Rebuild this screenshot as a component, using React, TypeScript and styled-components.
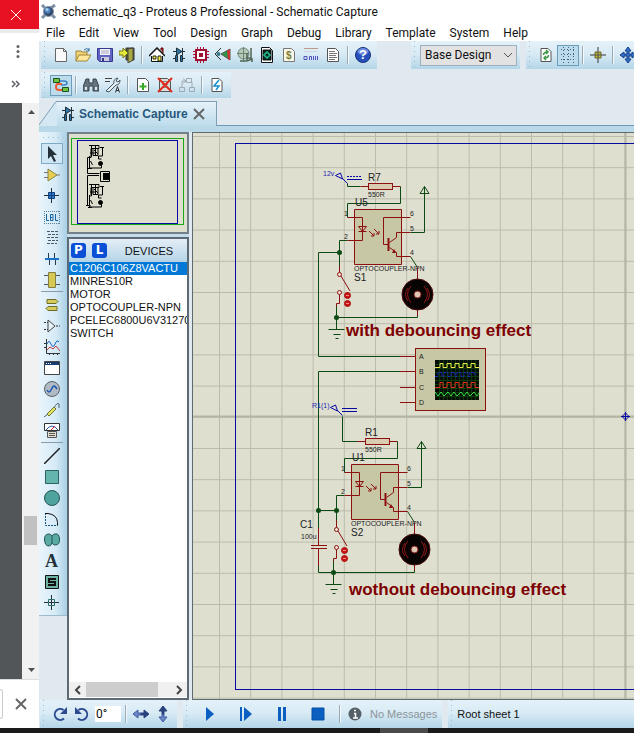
import React from 'react';
import styled, { createGlobalStyle, css } from 'styled-components';

const ui = 'Roboto, "Noto Sans", sans-serif';
const arial = '"Liberation Sans", Arial, sans-serif';
const barFill = 'linear-gradient(#e4f1f9 0%, #d9ebf5 45%, #b4d6e8 100%)';

const GlobalStyle = createGlobalStyle`
  *, *::before, *::after { box-sizing: border-box; }
  body { margin: 0; overflow: hidden; font: 12px/16px ${ui}; color: #111; }
  button, input, select { font: inherit; color: inherit; margin: 0; }
  svg { display: block; flex: none; }
`;

const Screen = styled.div`
  display: flex;
  flex-direction: column;
  height: 100vh;
  background: #fff;
`;
const Desktop = styled.div`
  display: flex;
  flex: 1;
  min-height: 0;
`;
const Taskbar = styled.footer`
  height: 5px;
  background: #1b1a1a;
  padding-left: 60%;
  &::before {
    content: '';
    display: block;
    width: 48px;
    height: 5px;
    background: #4b4a4a;
  }
`;

/* ---------- browser behind the window ---------- */
const BrowserEdge = styled.aside`
  display: flex;
  flex-direction: column;
  width: 39px;
  flex: none;
`;
const PlainButton = styled.button`
  display: flex;
  align-items: center;
  justify-content: center;
  padding: 0;
  border: 0;
  background: none;
  flex: none;
`;
const RedClose = styled(PlainButton)`
  height: 29px;
  background: #e81123;
  padding-right: 8px;
`;
const BrowserTools = styled.div`
  display: flex;
  flex-direction: column;
  height: 74px;
  padding: 8px 4px 0 0;
  gap: 10px;
  border-top: 4px solid #ebebeb;
`;
const BrowserTool = styled(PlainButton)<{ $end?: boolean }>`
  height: 22px;
  ${(p) => p.$end && css`padding-right: 4px;`}
`;
const BrowserPage = styled.div`
  display: flex;
  flex: 1;
  min-height: 0;
  background: #525659;
  justify-content: flex-end;
`;
const PageScroll = styled.div`
  display: flex;
  flex-direction: column;
  align-items: center;
  width: 17px;
  background: #f1f1f1;
`;
const PageThumb = styled.div`
  width: 13px;
  height: 29px;
  margin: auto 0 116px;
  background: #c1c1c1;
`;
const ScrollButton = styled(PlainButton)`
  width: 17px;
  height: 18px;
`;
const Download = styled.div`
  display: flex;
  align-items: center;
  justify-content: flex-end;
  height: 49px;
  padding-right: 10px;
  border-top: 1px solid #ddd;
`;
const DownloadEdge = styled.div`
  width: 3px;
  height: 30px;
  margin-right: auto;
  border: 1px solid #ccc;
  border-left: 0;
  border-radius: 0 4px 4px 0;
`;

/* ---------- application window ---------- */
const Window = styled.main`
  display: flex;
  flex-direction: column;
  flex: 1;
  min-width: 0;
  background: #e1e9f0;
`;
const TitleBar = styled.header`
  display: flex;
  align-items: center;
  gap: 5px;
  height: 24px;
  padding-left: 2px;
  background: #fff;
`;
const Title = styled.h1`
  margin: 0;
  font: 12px/16px ${ui};
  white-space: nowrap;
`;
const MenuBar = styled.nav`
  display: flex;
  height: 17px;
  background: #fff;
`;
const MenuItem = styled(PlainButton)`
  padding: 0 7px;
`;
const ToolbarRow = styled.div<{ $last?: boolean }>`
  display: flex;
  height: ${(p) => (p.$last ? 26 : 28)}px;
  margin-bottom: 3px;
  padding-left: 2px;
  overflow: hidden;
`;
const Toolbar = styled.div<{ $after?: number; $grow?: boolean }>`
  display: flex;
  align-items: center;
  flex: ${(p) => (p.$grow ? '1 0 auto' : 'none')};
  padding: 0 3px 0 9px;
  margin-right: ${(p) => p.$after ?? 0}px;
  background: radial-gradient(circle, #9fb9ca 1px, transparent 1px) 2px 3px / 3px 5px repeat-y, ${barFill};
`;
const Separator = styled.span`
  width: 1px;
  height: 18px;
  margin: 0 4px 0 3px;
  background: #9aabb6;
  box-shadow: 1px 0 #f2f8fc;
`;
const IconButton = styled(PlainButton)<{ $on?: boolean; $wide?: boolean }>`
  width: ${(p) => (p.$wide ? 36 : 22)}px;
  height: 21px;
  border: 1px solid ${(p) => (p.$on ? '#6d9cba' : 'transparent')};
  background: ${(p) => (p.$on ? '#bcdcec' : 'transparent')};
`;
const Combo = styled.div`
  display: grid;
  align-items: center;
  width: 97px;
  height: 21px;
  svg { grid-area: 1 / 1; justify-self: end; margin-right: 1px; pointer-events: none; }
`;
const ComboSelect = styled.select`
  grid-area: 1 / 1;
  width: 100%;
  height: 21px;
  padding: 0 4px;
  appearance: none;
  border: 1px solid #9db0bd;
  border-radius: 0;
  background: #e2e2e2;
`;
const TabStrip = styled.div`
  display: flex;
  height: 25px;
  flex: none;
  border-bottom: 1px solid #6f9ab3;
`;
const Tab = styled.div`
  display: flex;
  align-items: center;
  gap: 3px;
  height: 25px;
  padding: 0 9px 0 3px;
  border: solid #7f9fb3;
  border-width: 1px 1px 0 0;
  background: linear-gradient(#e6f2f9, #bcdcec);
`;
const TabName = styled(PlainButton)`
  gap: 3px;
  font: bold 12px/16px ${arial};
  color: #27587c;
`;
const Body = styled.div`
  display: flex;
  flex: 1;
  min-height: 0;
  padding-top: 6px;
  background: linear-gradient(#b9d8e8, #b9d8e8) 0 0 / 100% 6px no-repeat #e1e9f0;
`;
const Palette = styled.div`
  display: flex;
  flex-direction: column;
  align-items: center;
  align-self: flex-start;
  width: 28px;
  padding: 11px 2px 2px 0;
  background: radial-gradient(circle, #9fb9ca 1px, transparent 1px) 2px 4px / 5px 3px repeat-x,
    linear-gradient(90deg, #eaf5fc, #d5eaf6 60%, #a9d0e5);
  border-bottom: 1px solid #9dbccd;
`;
const PaletteButton = styled(PlainButton)<{ $on?: boolean }>`
  width: 22px;
  height: 21px;
  border: 1px solid ${(p) => (p.$on ? '#7faac5' : 'transparent')};
  background: ${(p) => (p.$on ? '#cfe7f4' : 'transparent')};
`;
const PaletteRule = styled.span`
  width: 22px;
  height: 1px;
  margin: 1px 0 2px;
  background: #8b9ca8;
`;
const Side = styled.section`
  display: flex;
  flex-direction: column;
  gap: 3px;
  width: 122px;
  flex: none;
  background: #c5dcea;
`;
const Overview = styled.div`
  height: 102px;
  flex: none;
  border: 2px solid #74808a;
  background: #dedfcf;
`;
const Picker = styled.div`
  display: flex;
  flex-direction: column;
  flex: 1;
  min-height: 0;
  border: 2px solid #5d6a75;
  background: #fff;
`;
const PickerHead = styled.div`
  display: flex;
  align-items: center;
  height: 23px;
  flex: none;
  padding: 0 2px;
  gap: 6px;
  background: linear-gradient(#e4eef7, #b5d4e6);
`;
const BlueKey = styled(PlainButton)`
  width: 15px;
  height: 15px;
  border-radius: 3px;
  background: #0a4fd6;
  color: #fff;
  font: bold 12px/15px "DejaVu Sans", sans-serif;
`;
const PickerTitle = styled.h2`
  margin: 0 auto;
  font: 11px/16px ${arial};
`;
const DeviceList = styled.ul`
  flex: 1;
  margin: 0;
  padding: 0;
  overflow: hidden;
  list-style: none;
`;
const Device = styled.button<{ $on?: boolean }>`
  display: block;
  width: 100%;
  height: 13px;
  padding: 0 1px;
  border: 0;
  overflow: hidden;
  text-align: left;
  white-space: nowrap;
  font: 11px/13px ${arial};
  color: ${(p) => (p.$on ? '#fff' : '#111')};
  background: ${(p) => (p.$on ? '#0078d7' : 'none')};
`;
const HScroll = styled.div`
  display: flex;
  height: 15px;
  margin-bottom: 1px;
  align-items: stretch;
  background: #f0f0f0;
`;
const HThumb = styled.div`
  width: 72px;
  margin-right: auto;
  background: #cdcdcd;
`;
const HArrow = styled(PlainButton)`
  width: 17px;
`;
const Canvas = styled.section`
  flex: 1;
  min-width: 0;
  margin-left: 3px;
  border: 1px solid #5b6b70;
  border-right: 0;
  background: #dedfcf;
  overflow: hidden;
`;
const StatusRow = styled(ToolbarRow)`
  margin: 0;
  padding-left: 1px;
  flex: none;
`;
const Angle = styled.input`
  width: 26px;
  height: 16px;
  padding: 0 1px;
  margin: 0 1px 0 2px;
  border: 0;
  background: #fff;
`;
const StatusText = styled.span<{ $dim?: boolean }>`
  font: 11px/16px ${arial};
  padding: ${(p) => (p.$dim ? '0 2px 0 4px' : '0')};
  color: ${(p) => (p.$dim ? '#8b949b' : '#111')};
`;

/* ---------- icons ---------- */
const K = '#23303a';
const page = <path d="M3 1.500h7l3 3v10H3z" fill="#fff" stroke="#555" />;
const icons: Record<string, React.ReactNode> = {
  new: <><path d="M2.500 1.500h8l3 3v10h-11z" fill="#fafafa" stroke="#666" /><path d="M10.500 1.500v3h3" fill="none" stroke="#666" /></>,
  open: <><path d="M1 14V4h5l1 1h5v3" fill="#efd479" stroke="#a08434" /><path d="M1 14l3-6h12l-4 6z" fill="#ffe89b" stroke="#a08434" /><path d="M9 3q3-3 5 0m0-2v3h-3" fill="none" stroke="#37719c" /></>,
  save: <><path d="M.5 1.500h15v13h-13l-2-2z" fill="#6264c4" stroke="#383a8c" /><path d="M3 2h10v6H3z" fill="#f1f3fa" /><path d="M4 4h8M4 6h8" stroke="#aab" /><path d="M4 10h8v4H4z" fill="#ccd" /><path d="M5 11h2v3H5z" fill="#333a80" /></>,
  exit: <><path d="M7 1h8v12H7z" fill="#5b5c22" stroke="#333" /><path d="M9 2l5-1v12l-5 3z" fill="#a9a944" stroke="#444" /><path d="M0 4h4V1l5 5-5 5V8H0z" fill="#e5e83c" stroke="#777716" /></>,
  home: <><path d="M12 3V1h2v5" fill="#a33" stroke="#600" /><path d="M2.500 8v6.500h11V8" fill="#fffde2" stroke="#111" /><path d="M0 9l8-8 8 8" fill="#fff" stroke="#111" strokeWidth="1.500" /><path d="M4 9h3v3H4z" fill="#ee3" stroke="#222" /><path d="M9 9h3v5H9z" fill="#ee3" stroke="#222" /></>,
  schem: <><path d="M2 4.500h12M11.500 1v7M2 11.500h2m8 0h2" stroke={K} /><path d="M5.500 1l5.500 3.500L5.500 8z" fill="#2876a5" stroke={K} /><path d="M4.500 8.500h2v6h-2zM9.500 8.500h2v6h-2z" fill="#2671a0" stroke={K} /></>,
  chip: <><path d="M0 4.500h16M0 7.500h16M0 10.500h16M4.500 0v16M7.500 0v16M10.500 0v16" stroke="#b31536" /><path d="M3 3h10v10H3z" fill="#fff" stroke="#a01030" strokeWidth="2" /><path d="M6 6h4v4H6z" fill="#a01030" /></>,
  view3d: <><path d="M6 1L0 7l6 6" fill="none" stroke="#333" /><circle cx="3.500" cy="7" r="2" fill="#3a7b88" /><path d="M6 7l9-5v11z" fill="#2a9a48" stroke="#555" /><path d="M12 4l3-2v11l-2-1z" fill="#c33" /></>,
  globe: <><circle cx="6.500" cy="6.500" r="5.500" fill="#b8c9b8" stroke="#688474" /><path d="M6.500 0v14M0 6.500h12" stroke="#688474" /><path d="M14 1v10h-4m0-5v8l5-2v3M3 14h6" fill="none" stroke="#526453" strokeWidth="1.500" /></>,
  gerber: <><path d="M2.500 .5h8l3 3v12h-11z" fill="#fff" stroke="#111" /><path d="M4 3h8v10H4z" fill="#05271a" stroke="#111" /><path d="M4 8h2m4 0h2M8 4v2m0 4v2M6 6h4v4H6z" fill="none" stroke="#29e1b1" /></>,
  bom: <><path d="M2.500 1.500h8l3 3v10h-11z" fill="#f7f7e7" stroke="#777" /><text x="5" y="12" fontFamily="Liberation Sans" fontSize="10" fontWeight="bold" fill="#807d32">$</text></>,
  ohms: <><path d="M1 1.500h14" stroke="#bb9c8c" /><path d="M1 4.500h14" stroke="#cdd8de" /><path d="M1 9.500h3v3H1zM6.500 13V9.500h2V13M10.500 9v4m2-4v4m2-4v4" fill="none" stroke="#5354bb" /></>,
  notes: <><path d="M2.500 1.500h8l3 3v10h-11z" fill="#fff" stroke="#555" /><path d="M4 4.500h6M4 6.500h8M4 8.500h7M4 10.500h8M4 12.500h6" stroke="#777" /></>,
  help: <><circle cx="8" cy="8" r="7.500" fill="#2850bd" stroke="#183077" /><ellipse cx="8" cy="4.500" rx="5.500" ry="3.500" fill="#6c8bda" /><text x="4" y="12" fontFamily="Liberation Sans" fontSize="13" fontWeight="bold" fill="#fff">?</text></>,
  refresh: <>{page}<path d="M5.500 8q0-3 4-3M8 3l2 2-2 2M10.500 8q0 3-4 3M8 9l-2 2 2 2" fill="none" stroke="#3d9948" strokeWidth="1.500" /></>,
  grid: <path d="M1 2.500h15M1 7.500h15M1 12.500h15M3.500 0v16M8.500 0v16M13.500 0v16" fill="none" stroke="#426481" strokeDasharray="1 2" />,
  origin: <><path d="M8 0v16M0 8h16" stroke="#333" /><path d="M5 5h6v6H5z" fill="#b8b63f" stroke="#6d6929" /><path d="M8 5v6M5 8h6" stroke="#555" /></>,
  pan: <path d="M8 0l3 4H9v3h3V5l4 3-4 3V9H9v3h2l-3 4-3-4h2V9H4v2L0 8l4-3v2h3V4H5z" fill="#366fc4" stroke="#123f88" />,
  auto: <><path d="M6 4h5q3 0 3 2t-3 2H8" fill="none" stroke="#3485c8" strokeWidth="1.500" /><path d="M9 7H5q-2 0-2 3t3 3h4" fill="none" stroke="#ee5934" strokeWidth="2" /><path d="M.5 1.500h6v4h-6zM9.500 10.500h6v4h-6z" fill="#72c33c" stroke="#17512a" /></>,
  find: <><path d="M3 2h3v4h4V2h3l3 8v4h-6V9H6v5H0v-4z" fill="#64737c" stroke="#34434e" /><path d="M2 10h2v3H2zM12 10h2v3h-2z" fill="#dce8ee" /></>,
  wrench: <><path d="M0 1.500h7M0 4.500h5" stroke="#444" /><path d="M1 14l8-8q-1-4 4-5l-2 3 2 1 2-2q0 5-4 5l-7 7z" fill="#e3edf2" stroke="#455965" /><path d="M10.500 15.500l2-6 2 6m-3.500-2h3" fill="none" stroke="#333" /></>,
  add: <><path d="M2.500 1.500h8l3 3v10h-11z" fill="#fff" stroke="#555" /><path d="M8 6v7M4.500 9.500h7" stroke="#36a927" strokeWidth="2" /></>,
  remove: <><path d="M2.500 1.500h8l3 3v10h-11z" fill="#ddd" stroke="#555" /><path d="M5 4.500h5M5 7.500h6M5 10.500h6" stroke="#888" /><path d="M1 1l14 14M15 1L1 15" stroke="#df2b1c" strokeWidth="2" /></>,
  tree: <><path d="M3 10V4h4m6 1v5M4 1.500l3 2.500-3 2.500M7.500 1.500h5v4h-5zM.5 10.500h5v4h-5zM10.500 10.500h5v4h-5z" fill="none" stroke="#9eabb2" /></>,
  erc: <>{page}<path d="M10 3L5 9h5l-3 4" fill="none" stroke="#168fca" strokeWidth="1.500" /></>,
  select: <path d="M4 0v13l3-3 3 6 2-1-3-6h4z" fill={K} />,
  part: <><path d="M0 5.500h4M0 10.500h4m8-2.500h4" stroke="#777" /><path d="M4 2l9 6-9 6z" fill="#e6cf51" stroke="#898544" /></>,
  junction: <><path d="M7.500 0v15M0 7.500h15" stroke={K} /><path d="M4.500 4.500h6v6h-6z" fill="#287acb" stroke="#123e79" /><path d="M7.500 4v7M4 7.500h7" stroke="#123e79" /></>,
  label: <><path d="M0 2.500h16M0 14.500h16M.5 2v13M15.500 2v13" stroke="#58809a" strokeDasharray="1 1" /><path d="M2.500 5v6.500H5M6.500 5.500v6h2.500v-6zM6.500 8.500h2M11.500 5v6.500H14" fill="none" stroke="#1363a1" /></>,
  script: <path d="M3 1.500h11M4 4.500h10M3 7.500h11M4 10.500h10M3 13.500h10" stroke="#4a5b66" strokeDasharray="3 1" />,
  bus: <><path d="M4.500 8V2m6 6V2M5.500 8v6m6-6v6" stroke="#263a4b" /><path d="M1 8h14" stroke="#1972c5" strokeWidth="2" /></>,
  subckt: <><path d="M0 3.500h16M0 12.500h16" stroke="#555" /><path d="M4.500 .5h7v15h-7z" fill="#d8c752" stroke="#827f43" /></>,
  terminal: <path d="M3 2.500h9l2 2-2 2H3zM13 9.500H4l-2 2 2 2h9z" fill="#d4cd5e" stroke="#6f6c25" />,
  pin: <><path d="M0 4.500h4M0 11.500h4m8-3.500h4" stroke="#333" strokeDasharray="2 1" /><path d="M4 2l7 6-7 6z" fill="#e5f2f8" stroke="#444" /></>,
  graph: <><path d="M2.500 0v14.500H16M0 4.500h2M0 8.500h2M5.500 14v2m4-2v2m4-2v2" stroke="#333" fill="none" /><path d="M3 5q2-5 4 0t4 0 4-2" fill="none" stroke="#1968be" /><path d="M3 11l3-3 3 2 3-3 4 5" fill="none" stroke="#c24039" /></>,
  popup: <><path d="M.5 1.500h15v13H.5z" fill="#fff" stroke="#444" /><path d="M1 2h14v3H1z" fill="#183c71" /><path d="M2 3.500h6" stroke="#fff" strokeDasharray="1 1" /></>,
  generator: <><circle cx="8" cy="8" r="7.500" fill="#b1bac5" stroke="#58616a" /><path d="M3 9q2 4 4 0t3-4 3 3" fill="none" stroke="#1956b0" strokeWidth="1.500" /></>,
  probe: <><path d="M0 15l4-3m6-6q3-6 5-4v4" fill="none" stroke="#53646b" /><path d="M3 12l7-7 2 2-7 7z" fill="#e2e65d" stroke="#6e7334" /></>,
  meter: <><path d="M.5 .5h15v7H.5z" fill="#fff" stroke="#333" /><path d="M2 7q6-8 12 0" fill="none" stroke="#315fb1" /><path d="M7 7l4-4" stroke="#d22" /><path d="M3.500 8.500h9v6h-9zM5 10.500h6M5 12.500h6" fill="#e2e1d2" stroke="#555" /></>,
  line: <path d="M0 16L16 0" stroke="#222" strokeWidth="1.500" />,
  box: <path d="M1.500 1.500h13v13h-13z" fill="#64b5ae" stroke="#2c6462" />,
  circle: <circle cx="8" cy="8" r="7.500" fill="#4fa39e" stroke="#265654" />,
  arc: <><path d="M1.500 2v12.500h12" fill="none" stroke="#15507c" strokeDasharray="2 1" /><path d="M1 2.500h3q9 1 9.500 9v3" fill="none" stroke="#111" /></>,
  path: <path d="M8 4Q7 2 5 2 0 2 .5 8T5 14q2 0 3-3 1 2 3 2 5 0 4.500-6T11 2Q9 2 8 4v7" fill="#58aaa3" stroke="#265755" />,
  text: <text x="1" y="14" fontSize="18" fontWeight="bold" fontFamily="Liberation Serif" fill={K}>A</text>,
  symbol: <><path d="M1.500 1.500h13v13h-13z" fill="#6cb3a4" stroke="#111" /><path d="M12 5H5v3h6v3H4" fill="none" stroke="#111" strokeWidth="2" /></>,
  marker: <><path d="M7.500 0v15M0 7.500h15" stroke={K} /><path d="M4.500 4.500h6v6h-6z" fill="none" stroke="#2e6e69" /></>,
  cw: <><path d="M12 12.500a5.500 5.500 0 1 1-.5-8.500" fill="none" stroke="#2c4a91" strokeWidth="2" /><path d="M15 1v7H8z" fill="#2c4a91" /></>,
  ccw: <><path d="M4 12.500a5.500 5.500 0 1 0 .5-8.500" fill="none" stroke="#2c4a91" strokeWidth="2" /><path d="M1 1v7h7z" fill="#2c4a91" /></>,
  flipx: <><path d="M0 8l5-4v3h3v2H5v3z" fill="#6d86c7" stroke="#405ca5" /><path d="M16 8l-5-4v3H8v2h3v3z" fill="#28427f" stroke="#28427f" /></>,
  flipy: <><path d="M8 16l-4-5h3V8h2v3h3z" fill="#6d86c7" stroke="#405ca5" /><path d="M8 0L4 5h3v3h2V5h3z" fill="#28427f" stroke="#28427f" /></>,
  play: <path d="M4 1l8 7-8 7z" fill="#0a5fc0" />,
  step: <path d="M2 1h2v14H2zM6 1l8 7-8 7z" fill="#0a5fc0" />,
  pause: <path d="M4 1h3v14H4zM9 1h3v14H9z" fill="#0a5fc0" />,
  stop: <path d="M2 2h12v12H2z" fill="#0a5fc0" stroke="#0650a8" />,
  info: <><circle cx="8" cy="8" r="6.500" fill="#555f66" /><path d="M7 7.500h1.500V12M6 12h5M7 4.500h2" stroke="#fff" strokeWidth="1.500" fill="none" /></>,
  logo: <><path d="M1 1l3 3M14 1l-4 3M1 14l3-3M14 14l-4-4" stroke="#7c8fa5" strokeWidth="3" /><circle cx="7.500" cy="7.500" r="5" fill="#33496b" stroke="#7f93ab" /><circle cx="6.500" cy="6.500" r="3" fill="#4f86c0" /><circle cx="6" cy="5.500" r="1.500" fill="#a6cbea" /></>,
  x: <path d="M3 3l10 10M13 3L3 13" stroke="#666" strokeWidth="2" />,
  bigx: <path d="M3 3l10 10M13 3L3 13" stroke="#fff" strokeWidth="1" />,
  up: <path d="M5 10h7L8.500 6z" fill="#505050" />,
  down: <path d="M5 6h7l-3.500 4z" fill="#505050" />,
  left: <path d="M10 4L6 8l4 4" fill="none" stroke="#444" strokeWidth="2" />,
  right: <path d="M6 4l4 4-4 4" fill="none" stroke="#444" strokeWidth="2" />,
  chevron: <path d="M4 6l4 4 4-4" fill="none" stroke="#555" />,
  dots: <><circle cx="8" cy="2.500" r="1.500" fill="#5f6368" /><circle cx="8" cy="7.500" r="1.500" fill="#5f6368" /><circle cx="8" cy="12.500" r="1.500" fill="#5f6368" /></>,
  more: <path d="M4 5l3 3-3 3m4-6l3 3-3 3" fill="none" stroke="#5f6368" strokeWidth="1.500" />,
};
const Icon = ({ name }: { name: string }) => (
  <svg width="16" height="16" viewBox="0 0 16 16" aria-hidden="true">{icons[name]}</svg>
);
const Tools = ({ names, on, wide }: { names: string[]; on?: string; wide?: boolean }) => (
  <>
    {names.map((n, i) =>
      n === '|' ? <Separator key={i} /> : (
        <IconButton key={i} $on={n === on} $wide={wide} aria-label={n}><Icon name={n} /></IconButton>
      ),
    )}
  </>
);

/* ---------- schematic ---------- */
const RED = '#8c1010';
const GREEN = '#0c4a14';
const BLUE = '#0808a4';
const Label = styled.text<{ $size?: number; $fill?: string }>`
  font: ${(p) => p.$size ?? 7}px ${arial};
  fill: ${(p) => p.$fill ?? '#222'};
`;
const Caption = styled.text`
  font: bold 17px ${arial};
  fill: #7e0000;
`;
const Wire = ({ d, color = GREEN }: { d: string; color?: string }) => (
  <path d={d} fill="none" stroke={color} />
);
const Node = ({ x, y }: { x: number; y: number }) => <circle cx={x} cy={y} r="2.500" fill={GREEN} />;

const Probe = ({ x, y, text, dx = -24, dashed }: { x: number; y: number; text: string; dx?: number; dashed?: boolean }) => (
  <g transform={`translate(${x} ${y})`}>
    <Label x={dx} y="-7" $fill="#2626b0">{text}</Label>
    <path d="M-11.500 -7.500l5-2.500 2 6zM-5 -5l5.500 5.500" fill="none" stroke={BLUE} />
    <path d="M0 -6.500h15" stroke={BLUE} strokeDasharray={dashed ? '2 1' : undefined} />
    <path d="M0 -3.500h15" stroke={BLUE} />
  </g>
);

type StageProps = { x: number; y: number; tapY: number; resistor: string; chip: string; sw: string };
const Stage = ({ x, y, tapY, resistor, chip, sw }: StageProps) => (
  <g transform={`translate(${x} ${y})`}>
    <Wire d="M154.500 53.500h13M207.500 53.500v17h-53v14M154.500 107.500h-8v32M217.500 99.500h14v-46M217.500 123.500l7 11M143.500 172.500v24M143.500 184.500h81v-3" />
    <Wire color={RED} d="M167.500 53.500h8M199.500 53.500h8M224.500 134.500v12M224.500 176.500v6M146.500 132.500v7M146.500 161.500v9h-3v3" />
    <rect x="175.500" y="50.500" width="24" height="6" fill="#d9ccb1" stroke={RED} />
    <path d="M161.500 76.500h47v55h-47z" fill="#c7c6a5" stroke={RED} />
    <path d="M154.500 84.500h15v23h-15M165.500 93.500h8l-4 5zM165.500 98.500h8M217.500 84.500h-27v27h5M217.500 99.500h-14v5l-7 5M217.500 123.500h-14v-4l-7-5M176 98l5 5m-3 0h3v-3M181 96l5 5m-3 0h3v-3" fill="none" stroke={RED} />
    <path d="M195.500 105v13" stroke={RED} strokeWidth="2" />
    <path d="M203 120l-4 0 2-4z" fill={RED} />
    <path d="M227 60.500h9l-4.500-7z" fill="none" stroke={GREEN} />
    <Node x={146.500} y={tapY} />
    <Node x={143.500} y={184.500} />
    <Wire d="M135.500 196.500h16M140.500 201.500h7M142.500 205.500h3" />
    <path d="M148 143l9 15" stroke={RED} />
    <circle cx="146.500" cy="141.500" r="2" fill="#efe2d2" stroke={RED} />
    <circle cx="146.500" cy="159.500" r="2" fill="#efe2d2" stroke={RED} />
    {[162.5, 170.5].map((cy) => (
      <g key={cy}>
        <circle cx="154.500" cy={cy} r="3" fill="#c81414" stroke="#b00d0d" />
        <path d={`M153 ${cy}h3`} stroke="#eb8d8d" />
      </g>
    ))}
    <circle cx="224.500" cy="161.500" r="15.500" fill="#080404" stroke="#4c0909" />
    <circle cx="224.500" cy="161.500" r="3.500" fill="#dcc8b4" stroke="#821717" />
    <path d="M218 153q-7 8 0 17M215 155q-5 7 0 13M231 153q7 8 0 17M234 155q5 7 0 13" fill="none" stroke="#901818" />
    <Label x="175" y="48" $size={10}>{resistor}</Label>
    <Label x="175" y="64">550R</Label>
    <Label x="162" y="73" $size={10}>{chip}</Label>
    <Label x="161" y="148" $size={10}>{sw}</Label>
    <Label x="161" y="138">OPTOCOUPLER-NPN</Label>
    <Label x="151" y="83">1</Label>
    <Label x="151" y="106">2</Label>
    <Label x="217" y="83">6</Label>
    <Label x="217" y="98">5</Label>
    <Label x="217" y="122">4</Label>
  </g>
);

const Oscilloscope = () => (
  <g>
    <Wire color={RED} d="M207 223.500h15M207 238.500h15M207 254.500h15M207 269.500h15" />
    <rect x="222.500" y="215.500" width="70" height="62" fill="#c7c6a5" stroke={RED} />
    <rect x="242" y="227" width="44" height="40" fill="#050d05" />
    <path d="M246.500 227v40M250.500 227v40M254.500 227v40M258.500 227v40M262.500 227v40M266.500 227v40M270.500 227v40M274.500 227v40M278.500 227v40M282.500 227v40M242 231.500h44M242 235.500h44M242 239.500h44M242 243.500h44M242 247.500h44M242 251.500h44M242 255.500h44M242 259.500h44M242 263.500h44" stroke="#0b3b0d" />
    <path d="M242 234.500h5v-4h3v4h4v-4h4v4h4v-4h4v4h4v-4h4v4h4v-4h4v4h4" fill="none" stroke="#e9e94a" />
    <path d="M242 243.500h3v-4h4v4h2v-4h4v4h3v-4h4v4h2v-4h4v4h3v-4h4v4h2v-4h5v4" fill="none" stroke="#1b2bc0" strokeDasharray="3 1" />
    <path d="M242 254.500h5v-5h3v5h4v-5h4v5h4v-5h4v5h4v-5h4v5h4v-5h4v5h4" fill="none" stroke="#e03018" />
    <path d="M242 259l3 4 3-4 3 4 4-4 3 4 3-4 3 4 4-4 3 4 3-4 3 4 4-4 3 4 2-3" fill="none" stroke="#3be04a" />
    {['A', 'B', 'C', 'D'].map((t, i) => <Label key={t} x="226" y={[226, 241, 257, 272][i]}>{t}</Label>)}
  </g>
);

const Schematic = () => (
  <svg width="100%" height="100%" aria-label="Schematic sheet">
    <defs>
      <pattern id="grid" x="26" y="3" width="31.200" height="31.200" patternUnits="userSpaceOnUse">
        <path d="M.5 0v31.200M0 .5h31.200" stroke="#babba9" />
      </pattern>
    </defs>
    <rect width="100%" height="100%" fill="url(#grid)" />
    <path d="M432.500 0v1600M0 283.500h2400" stroke="#b4b5a4" strokeWidth="2" />
    <rect x="42.500" y="10.500" width="780" height="546" fill="none" stroke={BLUE} />
    <Wire d="M146.500 119.500h-21v104h82M207 238.500h-81.500v157M125.500 377.500h18M125.500 432v7.500h18" />
    <Wire color={RED} d="M125.500 395v17M125.500 416v17M118 412.500h16M118 415.500h16" />
    <Node x={125.500} y={377.500} />
    <Wire d="M154.500 50.500v3M149.500 283.500v25h15" />
    <Probe x={154} y={50} text="12v" dashed />
    <Probe x={149} y={282} text="R1(1)" dx={-30} />
    <Stage x={0} y={0} tapY={119.5} resistor="R7" chip="U5" sw="S1" />
    <Stage x={-3} y={255} tapY={122.5} resistor="R1" chip="U1" sw="S2" />
    <Label x="107" y="395" $size={10}>C1</Label>
    <Label x="108" y="406">100u</Label>
    <Caption x="153" y="203">with debouncing effect</Caption>
    <Caption x="156" y="462">wothout debouncing effect</Caption>
    <Oscilloscope />
    <path d="M432.500 279v9M428 283.500h9M432.500 280l3.500 3.500-3.500 3.500-3.500-3.500z" fill="none" stroke={BLUE} />
  </svg>
);

const OverviewDrawing = () => (
  <svg width="118" height="98" aria-label="Sheet overview">
    <rect x="2.500" y="4.500" width="112" height="86" fill="none" stroke="#18a818" />
    <rect x="8.500" y="6.500" width="100" height="83" fill="none" stroke={BLUE} />
    {[0, 39].map((dy) => (
      <g key={dy} transform={`translate(0 ${dy})`} stroke="#000" fill="none">
        <path d="M20 11.500h10v3h-8v9M24 14.500h5v7h-5zM25 16l4 4M21 19h6M22.500 11v12M26.500 11v10M33.500 13v9h-4v3h3M31 13.500h4M20.500 22v12h12v-3M19 34.500h4M21.500 27l2 4" />
        <circle cx="31.500" cy="29.500" r="2" fill="#000" />
      </g>
    ))}
    <path d="M22 23.500h-3.500v16h12M30 41.500H18.500v30h3M17 71.500h4" fill="none" stroke="#000" />
    <path d="M31.500 37.500h9v10h-9z" fill="none" stroke="#000" />
    <path d="M34 39h6v7h-6z" />
  </svg>
);

const menus = ['File', 'Edit', 'View', 'Tool', 'Design', 'Graph', 'Debug', 'Library', 'Template', 'System', 'Help'];
const devices = ['C1206C106Z8VACTU', 'MINRES10R', 'MOTOR', 'OPTOCOUPLER-NPN', 'PCELEC6800U6V31270', 'SWITCH'];
const palette = ['select', 'part', 'junction', 'label', 'script', 'bus', 'subckt', '|', 'terminal', 'pin', 'graph', 'popup', 'generator', 'probe', 'meter', '|', 'line', 'box', 'circle', 'arc', 'path', 'text', 'symbol', 'marker'];

export default function App() {
  return (
    <Screen>
      <GlobalStyle />
      <Desktop>
        <BrowserEdge>
          <RedClose aria-label="Close"><Icon name="bigx" /></RedClose>
          <BrowserTools>
            <BrowserTool aria-label="Menu"><Icon name="dots" /></BrowserTool>
            <BrowserTool $end aria-label="More"><Icon name="more" /></BrowserTool>
          </BrowserTools>
          <BrowserPage>
            <PageScroll>
              <ScrollButton aria-label="Scroll up"><Icon name="up" /></ScrollButton>
              <PageThumb />
              <ScrollButton aria-label="Scroll down"><Icon name="down" /></ScrollButton>
            </PageScroll>
          </BrowserPage>
          <Download>
            <DownloadEdge />
            <PlainButton aria-label="Dismiss"><Icon name="x" /></PlainButton>
          </Download>
        </BrowserEdge>

        <Window>
          <TitleBar>
            <Icon name="logo" />
            <Title>schematic_q3 - Proteus 8 Professional - Schematic Capture</Title>
          </TitleBar>
          <MenuBar>{menus.map((m) => <MenuItem key={m}>{m}</MenuItem>)}</MenuBar>
          <ToolbarRow>
            <Toolbar $after={34}>
              <Tools names={['new', 'open', 'save', 'exit', '|', 'home', 'schem', 'chip', 'view3d', 'globe', 'gerber', 'bom', 'ohms', 'notes', '|', 'help']} />
            </Toolbar>
            <Toolbar $after={6}>
              <Combo>
                <ComboSelect aria-label="Design variant"><option>Base Design</option></ComboSelect>
                <Icon name="chevron" />
              </Combo>
            </Toolbar>
            <Toolbar $grow>
              <Tools names={['refresh', 'grid', '|', 'origin', '|', 'pan']} on="grid" />
            </Toolbar>
          </ToolbarRow>
          <ToolbarRow $last>
            <Toolbar>
              <Tools names={['auto', '|', 'find', 'wrench', '|', 'add', 'remove', 'tree', '|', 'erc']} on="auto" />
            </Toolbar>
          </ToolbarRow>
          <TabStrip>
            <svg width="18" height="25" aria-hidden="true">
              <path d="M0 24L17 0h1v25H0z" fill="#d3e8f3" />
              <path d="M0 24L17 .5h1" fill="none" stroke="#7f9fb3" />
            </svg>
            <Tab>
              <TabName><Icon name="schem" />Schematic Capture</TabName>
              <PlainButton aria-label="Close tab"><Icon name="x" /></PlainButton>
            </Tab>
          </TabStrip>
          <Body>
            <Palette>
              {palette.map((n, i) =>
                n === '|' ? <PaletteRule key={i} /> : (
                  <PaletteButton key={i} $on={n === 'select'} aria-label={n}><Icon name={n} /></PaletteButton>
                ),
              )}
            </Palette>
            <Side>
              <Overview><OverviewDrawing /></Overview>
              <Picker>
                <PickerHead>
                  <BlueKey>P</BlueKey>
                  <BlueKey>L</BlueKey>
                  <PickerTitle>DEVICES</PickerTitle>
                </PickerHead>
                <DeviceList>
                  {devices.map((d, i) => <li key={d}><Device $on={i === 0}>{d}</Device></li>)}
                </DeviceList>
                <HScroll>
                  <HArrow aria-label="Scroll left"><Icon name="left" /></HArrow>
                  <HThumb />
                  <HArrow aria-label="Scroll right"><Icon name="right" /></HArrow>
                </HScroll>
              </Picker>
            </Side>
            <Canvas><Schematic /></Canvas>
          </Body>
          <StatusRow>
            <Toolbar $after={6}>
              <Tools names={['cw', 'ccw']} />
              <Angle aria-label="Rotation angle" defaultValue="0°" />
              <Tools names={['|', 'flipx', 'flipy']} />
            </Toolbar>
            <Toolbar $after={6}>
              <Tools wide names={['play', 'step', 'pause', 'stop']} />
              <Tools names={['|', 'info']} />
              <StatusText $dim>No Messages</StatusText>
            </Toolbar>
            <Toolbar $grow><StatusText>Root sheet 1</StatusText></Toolbar>
          </StatusRow>
        </Window>
      </Desktop>
      <Taskbar />
    </Screen>
  );
}
